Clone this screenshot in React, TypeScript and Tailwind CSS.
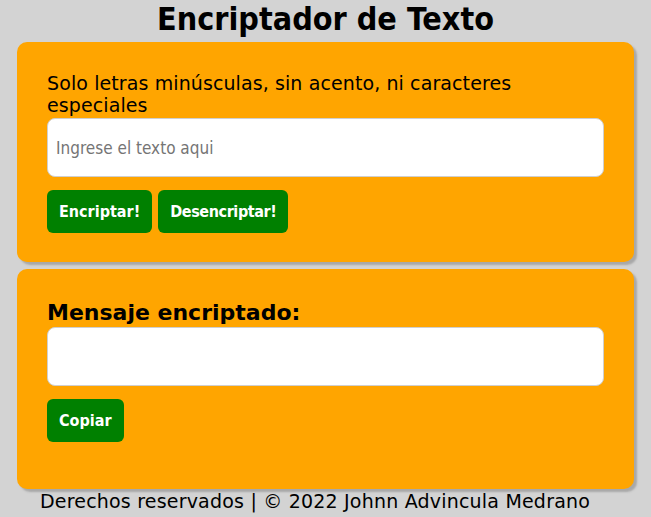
export default function App() {
  return (
    <main className="min-h-screen bg-[#d3d3d3] pb-2 font-['DejaVu_Sans',sans-serif] text-black">
      {/* Title */}
      <h1 className="h-[42px] pt-[1px] text-center font-['DejaVu_Sans_Condensed','DejaVu_Sans',sans-serif] text-[32px] font-bold leading-[36px]">
        Encriptador de Texto
      </h1>

      {/* Input card */}
      <section className="mx-[17px] h-[220px] rounded-[10px] bg-[#ffa500] px-[30px] pt-[30px] shadow-[3px_3px_2px_#a8a8a8]">
        <p className="text-[19px] leading-[22px] tracking-[0.1px]">
          Solo letras minúsculas, sin acento, ni caracteres especiales
        </p>
        <input
          type="text"
          placeholder="Ingrese el texto aqui"
          className="mt-[2px] block h-[59px] w-full rounded-[8px] border border-[#cfcfcf] bg-white px-2 font-['DejaVu_Sans_Condensed','DejaVu_Sans',sans-serif] text-[17px] outline-none placeholder:text-[#757575]"
        />
        <div className="mt-[13px] flex gap-[6px]">
          <button className="h-[43px] rounded-[6px] bg-[#008000] px-3 font-['DejaVu_Sans_Condensed','DejaVu_Sans',sans-serif] text-[16px] font-bold text-white">
            Encriptar!
          </button>
          <button className="h-[43px] rounded-[6px] bg-[#008000] px-3 font-['DejaVu_Sans_Condensed','DejaVu_Sans',sans-serif] text-[16px] font-bold tracking-[-0.4px] text-white">
            Desencriptar!
          </button>
        </div>
      </section>

      {/* Output card */}
      <section className="mx-[17px] mt-[7px] h-[220px] rounded-[10px] bg-[#ffa500] px-[30px] pt-[30px] shadow-[3px_3px_2px_#a8a8a8]">
        <h2 className="text-[22px] font-bold leading-[28px]">Mensaje encriptado:</h2>
        <textarea
          readOnly
          className="block h-[59px] w-full resize-none rounded-[8px] border border-[#cfcfcf] bg-white px-2 outline-none"
        />
        <button className="mt-[13px] h-[43px] rounded-[6px] bg-[#008000] px-3 font-['DejaVu_Sans_Condensed','DejaVu_Sans',sans-serif] text-[16px] font-bold text-white">
          Copiar
        </button>
      </section>

      {/* Footer */}
      <footer className="pr-[21px] text-center text-[19px] leading-[24px] tracking-[0.2px]">
        Derechos reservados | © 2022 Johnn Advincula Medrano
      </footer>
    </main>
  )
}
